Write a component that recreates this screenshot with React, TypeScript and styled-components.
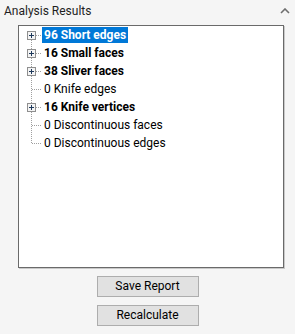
import React from "react";
import styled, { createGlobalStyle } from "styled-components";

const Global = createGlobalStyle`
  html, body { margin: 0; padding: 0; background: #f5f5f5; }
  body { font-family: Roboto, "Noto Sans", sans-serif; }
`;

const Page = styled.div`
  width: 295px;
  height: 334px;
  background: #f5f5f5;
  display: flex;
  flex-direction: column;
  box-sizing: border-box;
`;

const Header = styled.div`
  height: 22px;
  display: flex;
  align-items: center;
  justify-content: space-between;
  padding: 0 5px 0 4px;
  box-sizing: border-box;
`;

const Title = styled.span`
  font-size: 12px;
  color: #1e1e1e;
  line-height: 22px;
`;

const TreeBox = styled.div`
  margin: 3px 11px 0 18px;
  height: 243px;
  box-sizing: border-box;
  background: #ffffff;
  border: 1px solid #6a6a6a;
  box-shadow: 1px 1px 0 #c9c9c9;
  padding-top: 0px;
  display: flex;
  flex-direction: column;
`;

const Row = styled.div`
  height: 18px;
  display: flex;
  align-items: center;
`;

const Label = styled.span<{ $bold?: boolean; $selected?: boolean }>`
  font-size: 12px;
  line-height: 16px;
  padding: 0 2px;
  font-weight: ${(p) => (p.$bold ? 700 : 400)};
  color: ${(p) => (p.$selected ? "#ffffff" : "#000000")};
  background: ${(p) => (p.$selected ? "#0078d7" : "transparent")};
  white-space: nowrap;
`;

const Buttons = styled.div`
  display: flex;
  flex-direction: column;
  align-items: center;
  gap: 8px;
  margin-top: 8px;
`;

const Button = styled.button`
  width: 102px;
  height: 21px;
  box-sizing: border-box;
  background: #e1e1e1;
  border: 1px solid #adadad;
  font-family: Roboto, "Noto Sans", sans-serif;
  font-size: 12px;
  color: #000;
  padding: 0;
  line-height: 19px;
`;

type Pos = "first" | "mid" | "last";

const Connector: React.FC<{ pos: Pos; expandable: boolean }> = ({ pos, expandable }) => {
  const cx = 12.5;
  const cy = 9.5;
  const y1 = pos === "first" ? cy : 0;
  const y2 = pos === "last" ? cy : 18;
  return (
    <svg width="23" height="18" viewBox="0 0 23 18" style={{ flex: "none" }} shapeRendering="crispEdges">
      <line x1={cx} y1={y1} x2={cx} y2={y2} stroke="#a0a0a0" strokeWidth="1" strokeDasharray="1 1" />
      <line x1={cx} y1={cy} x2={22} y2={cy} stroke="#a0a0a0" strokeWidth="1" strokeDasharray="1 1" />
      {expandable && (
        <g>
          <rect x={8.5} y={5.5} width={8} height={8} fill="#f4f4f4" stroke="#8f8f8f" />
          <line x1={10} y1={cy} x2={15} y2={cy} stroke="#1e395b" />
          <line x1={cx} y1={7} x2={cx} y2={12} stroke="#1e395b" />
        </g>
      )}
    </svg>
  );
};

const Chevron = () => (
  <svg width="10" height="6" viewBox="0 0 10 6">
    <path d="M1 5 L5 1 L9 5" fill="none" stroke="#6e6e6e" strokeWidth="1.6" />
  </svg>
);

const items = [
  { text: "96 Short edges", bold: true, exp: true, sel: true },
  { text: "16 Small faces", bold: true, exp: true },
  { text: "38 Sliver faces", bold: true, exp: true },
  { text: "0 Knife edges", bold: false, exp: false },
  { text: "16 Knife vertices", bold: true, exp: true },
  { text: "0 Discontinuous faces", bold: false, exp: false },
  { text: "0 Discontinuous edges", bold: false, exp: false },
];

export default function App() {
  return (
    <Page>
      <Global />
      <Header>
        <Title>Analysis Results</Title>
        <Chevron />
      </Header>
      <TreeBox>
        {items.map((it, i) => (
          <Row key={i}>
            <Connector pos={i === 0 ? "first" : i === items.length - 1 ? "last" : "mid"} expandable={it.exp} />
            <Label $bold={it.bold} $selected={it.sel}>{it.text}</Label>
          </Row>
        ))}
      </TreeBox>
      <Buttons>
        <Button>Save Report</Button>
        <Button>Recalculate</Button>
      </Buttons>
    </Page>
  );
}
